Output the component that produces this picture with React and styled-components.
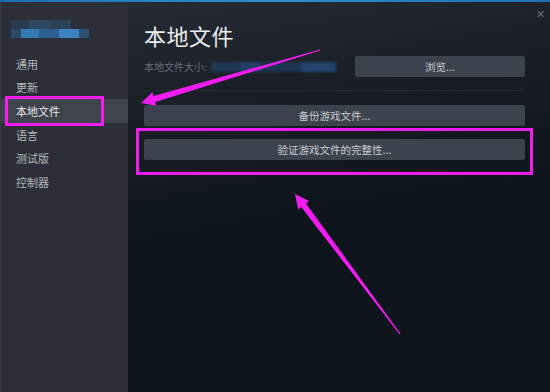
import React from "react"
import styled, {createGlobalStyle} from "styled-components"

const navItems = ["通用", "更新", "本地文件", "语言", "测试版", "控制器"]

const App = () => {
    return (
        <>
        <GlobalStyle />
        <Window>
            <TopLine />
            <Body>
                <Sidebar>
                    <Logo>
                        <LogoRow>
                            <Blur w={18} c="#2a3b4f" />
                            <Blur w={22} c="#2c4862" />
                            <Blur w={20} c="#2a4158" />
                        </LogoRow>
                        <LogoRow>
                            <Blur w={10} c="#2b4a68" />
                            <Blur w={18} c="#3478b6" />
                            <Blur w={20} c="#2f5f8f" />
                            <Blur w={20} c="#3a82c2" />
                            <Blur w={10} c="#2c5274" />
                        </LogoRow>
                    </Logo>
                    <Nav>
                        {navItems.map(item => (
                            <NavItem key={item} active={item === "本地文件"}>{item}</NavItem>
                        ))}
                    </Nav>
                </Sidebar>

                <Main>
                    <Close>✕</Close>
                    <Title>本地文件</Title>
                    <SizeRow>
                        <SizeLabel>
                            本地文件大小:
                            <SizeBlur>
                                <Blur w={30} c="#1f3654" h={10} />
                                <Blur w={20} c="#22406a" h={10} />
                                <Blur w={40} c="#1d3352" h={10} />
                                <Blur w={35} c="#23426c" h={10} />
                            </SizeBlur>
                        </SizeLabel>
                        <Button narrow>浏览...</Button>
                    </SizeRow>
                    <Separator />
                    <Button>备份游戏文件...</Button>
                    <Button spaced>验证游戏文件的完整性...</Button>
                </Main>
            </Body>

            <Annotations viewBox="0 0 550 392">
                <rect x="6.5" y="97.5" width="96" height="27" fill="none" stroke="#f21cf0" strokeWidth="3" />
                <rect x="137.5" y="129.5" width="394" height="44" fill="none" stroke="#f21cf0" strokeWidth="3" />
                {/* tapered arrow towards the sidebar item */}
                <polygon
                    points="141,103 152.4,92.3 153.5,96 320,49.5 320,50.5 155.3,102 156.4,105.8"
                    fill="#f21cf0"
                />
                {/* tapered arrow towards the verify button */}
                <polygon
                    points="295,194 309,201 306,203.5 400.5,333.7 399.5,334.3 301.2,207 298.2,209.5"
                    fill="#f21cf0"
                />
            </Annotations>
        </Window>
        </>
    )
}

export default App


//-----------------------------------------------STYLES-----------------------------------------------//

const GlobalStyle = createGlobalStyle`
    html, body {
        margin: 0;
        padding: 0;
        background: #0e141b;
    }
    body {
        font-family: "Noto Sans CJK SC", "Noto Sans", sans-serif;
    }
`
const Window = styled.div`
    width: 550px;
    height: 392px;
    position: relative;
    overflow: hidden;
    display: flex;
    flex-direction: column;
`
const TopLine = styled.div`
    height: 2px;
    background: linear-gradient(90deg, #1b6fb0, #2a8fd8 50%, #1d6fb5);
    flex-shrink: 0;
`
const Body = styled.div`
    flex: 1;
    display: flex;
`
const Sidebar = styled.div`
    width: 127px;
    background: #2c2f37;
    border-left: 1px solid #383c45;
    display: flex;
    flex-direction: column;
`
const Logo = styled.div`
    padding: 18px 0 0 10px;
    height: 32px;
    display: flex;
    flex-direction: column;
    filter: blur(0.6px);
`
const LogoRow = styled.div`
    display: flex;
    height: 9px;
`
const Blur = styled.div`
    width: ${props => props.w}px;
    height: ${props => props.h ? props.h + "px" : "100%"};
    background: ${props => props.c};
`
const Nav = styled.div`
    display: flex;
    flex-direction: column;
`
const NavItem = styled.div`
    height: 23.6px;
    display: flex;
    align-items: center;
    padding-left: 15px;
    font-size: 11px;
    color: ${props => props.active ? "#e8eaec" : "#b4b8bd"};
    background: ${props => props.active ? "#3e434c" : "transparent"};
`
const Main = styled.div`
    flex: 1;
    position: relative;
    padding: 18px 25px 0 16px;
    background: linear-gradient(170deg, #262a32 0%, #1a1f27 25%, #0f151c 50%, #0e141b 100%);
    display: flex;
    flex-direction: column;
`
const Close = styled.div`
    position: absolute;
    top: 3px;
    right: 5px;
    font-size: 11px;
    color: #6b7079;
`
const Title = styled.div`
    font-size: 22px;
    line-height: 30px;
    color: #eceef0;
    letter-spacing: 0.5px;
`
const SizeRow = styled.div`
    display: flex;
    align-items: center;
    justify-content: space-between;
    margin-top: 6px;
`
const SizeLabel = styled.div`
    display: flex;
    align-items: center;
    font-size: 10px;
    color: #6a6f78;
`
const SizeBlur = styled.div`
    display: flex;
    margin-left: 4px;
    filter: blur(1px);
`
const Button = styled.div`
    width: ${props => props.narrow ? "170px" : "100%"};
    height: 21px;
    margin-top: ${props => props.spaced ? "13px" : "0"};
    border-radius: 2px;
    background: #3d434e;
    color: #c9cdd2;
    font-size: 10.5px;
    display: flex;
    align-items: center;
    justify-content: center;
    box-sizing: border-box;
`
const Separator = styled.div`
    height: 1px;
    background: #252a32;
    margin: 13px 0 14px;
`
const Annotations = styled.svg`
    position: absolute;
    left: 0;
    top: 0;
    width: 550px;
    height: 392px;
    pointer-events: none;
`
